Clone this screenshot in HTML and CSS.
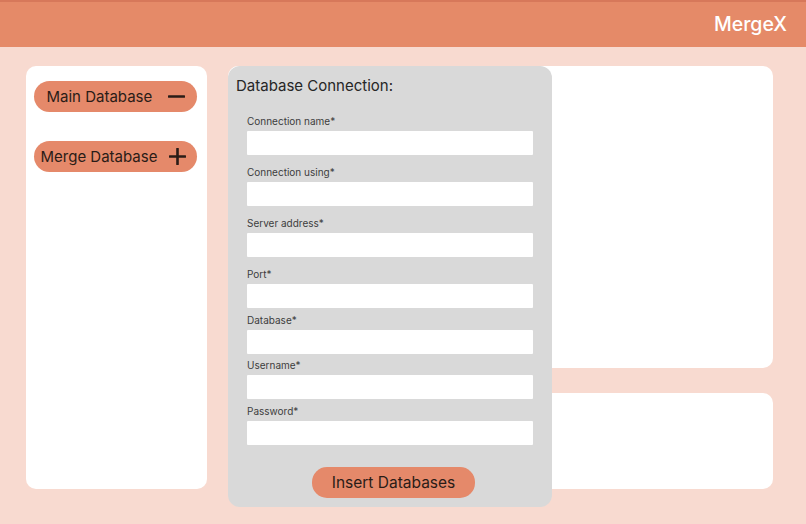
FILE: index.html
```html
<!DOCTYPE html>
<html lang="en">
<head>
<meta charset="utf-8">
<title>MergeX</title>
<link rel="stylesheet" href="styles.css">
</head>
<body>
<header class="topbar">
  <div class="brand">MergeX</div>
</header>
<main class="main">
  <aside class="sidebar">
    <button class="pill pill--main">
      <span>Main Database</span>
      <svg class="pill-icon" width="17" height="17" viewBox="0 0 17 17"><path d="M1 8.5H16" stroke="#2a1c17" stroke-width="2.6" stroke-linecap="round"/></svg>
    </button>
    <button class="pill pill--merge">
      <span>Merge Database</span>
      <svg class="pill-icon" width="17" height="17" viewBox="0 0 17 17"><path d="M0.8 8.5H16.2M8.5 0.8V16.2" stroke="#2a1c17" stroke-width="2.6" stroke-linecap="round"/></svg>
    </button>
  </aside>
  <section class="content">
    <div class="panel panel--top"></div>
    <div class="panel panel--bottom"></div>
    <div class="dialog">
      <h2 class="dialog-title">Database Connection:</h2>
      <form class="form">
        <div class="field field--loose"><label>Connection name*</label><input type="text"></div>
        <div class="field field--loose"><label>Connection using*</label><input type="text"></div>
        <div class="field field--loose"><label>Server address*</label><input type="text"></div>
        <div class="field field--loose"><label>Port*</label><input type="text"></div>
        <div class="field field--tight"><label>Database*</label><input type="text"></div>
        <div class="field field--tight"><label>Username*</label><input type="text"></div>
        <div class="field field--tight"><label>Password*</label><input type="password"></div>
        <div class="actions"><button type="button" class="insert">Insert Databases</button></div>
      </form>
    </div>
  </section>
</main>
</body>
</html>
```
FILE: styles.css
```css
* { box-sizing: border-box; }
html, body {
  margin: 0;
  padding: 0;
  width: 806px;
  height: 524px;
  overflow: hidden;
}
body {
  background: #f8dad0;
  font-family: Inter, "Noto Sans", "Liberation Sans", sans-serif;
  color: #2a1c17;
}
.topbar {
  height: 47px;
  background: #e58a68;
  border-top: 2px solid #d7785a;
  display: flex;
  align-items: center;
  justify-content: flex-end;
  padding-right: 19px;
}
.brand {
  color: #ffffff;
  font-size: 19.5px;
  font-weight: 500;
  margin-top: -2px;
}
.main {
  display: flex;
  padding: 19px 33px 0 26px;
  gap: 21px;
}
.sidebar {
  width: 181px;
  height: 423px;
  background: #ffffff;
  border-radius: 10px;
  padding: 15px 10px 0 8px;
  display: flex;
  flex-direction: column;
  gap: 29px;
}
.pill {
  height: 31px;
  width: 163px;
  border: none;
  border-radius: 16px;
  background: #e5896a;
  color: #2a1c17;
  font-family: inherit;
  font-size: 15px;
  display: flex;
  align-items: center;
  justify-content: space-between;
  padding: 0;
}
.pill--main { padding: 0 12px 0 12.5px; }
.pill--merge { padding: 0 11.5px 0 6.5px; }
.pill-icon { display: block; }
.content {
  flex: 1;
  position: relative;
  display: flex;
  flex-direction: column;
  gap: 25px;
}
.panel {
  background: #ffffff;
  border-radius: 10px;
}
.panel--top { height: 302px; }
.panel--bottom { height: 96px; }
.dialog {
  position: absolute;
  left: 0;
  top: 0;
  width: 324px;
  height: 441px;
  background: #d9d9d9;
  border-radius: 12px;
  padding: 10px 19px 0 8px;
}
.dialog-title {
  margin: 0;
  font-size: 15px;
  font-weight: 400;
  color: #262626;
  line-height: 19px;
}
.form {
  display: flex;
  flex-direction: column;
  padding-left: 11px;
  margin-top: 20px;
}
.field {
  display: flex;
  flex-direction: column;
}
.field--loose + .field--loose { margin-top: 11px; }
.field--tight { margin-top: 5.5px; }
.field label {
  font-size: 10px;
  line-height: 12px;
  color: #3d3d3d;
  margin-bottom: 4px;
}
.field input {
  height: 24px;
  width: 286px;
  border: none;
  background: #ffffff;
  border-radius: 1px;
  padding: 0 6px;
  outline: none;
}
.actions {
  display: flex;
  padding-left: 65px;
  margin-top: 22px;
}
.insert {
  width: 163px;
  height: 31px;
  border: none;
  border-radius: 15px;
  background: #e5896a;
  color: #2a1c17;
  font-family: inherit;
  font-size: 15.5px;
  padding: 0;
}
```
